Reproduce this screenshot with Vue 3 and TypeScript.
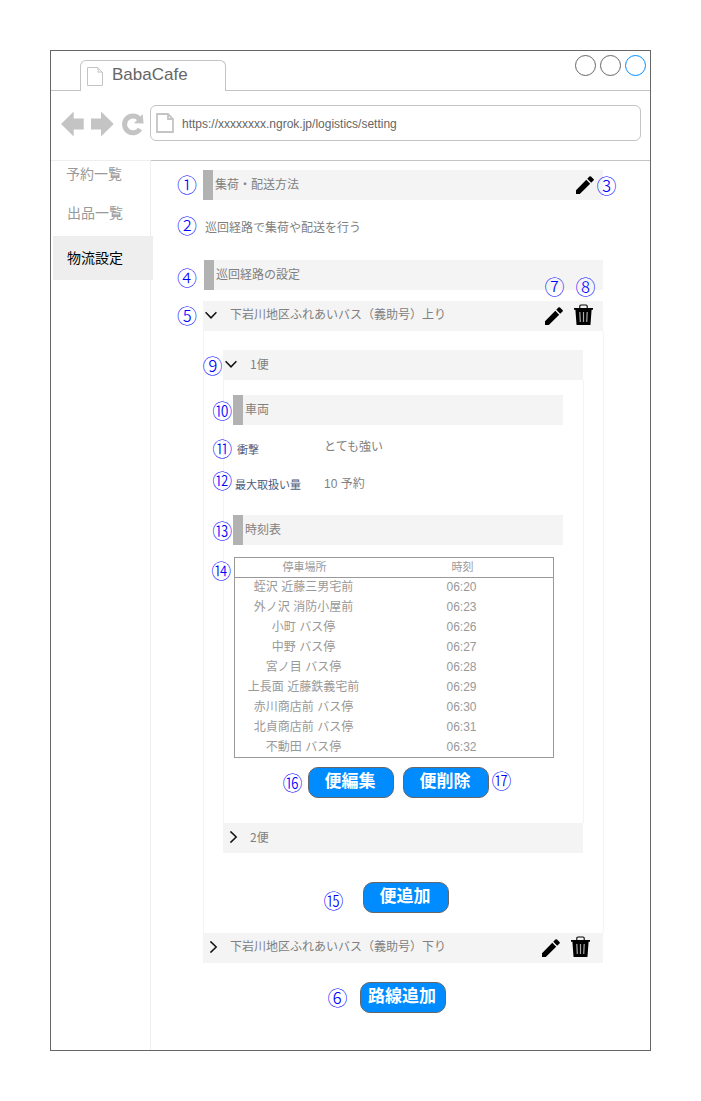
<script setup lang="ts">
interface Stop { name: string; time: string }
interface Note { label: string; x: number; y: number }

const stops: Stop[] = [
  { name: '蛭沢 近藤三男宅前', time: '06:20' },
  { name: '外ノ沢 消防小屋前', time: '06:23' },
  { name: '小町 バス停', time: '06:26' },
  { name: '中野 バス停', time: '06:27' },
  { name: '宮ノ目 バス停', time: '06:28' },
  { name: '上長面 近藤鉄義宅前', time: '06:29' },
  { name: '赤川商店前 バス停', time: '06:30' },
  { name: '北貞商店前 バス停', time: '06:31' },
  { name: '不動田 バス停', time: '06:32' },
]

// Callout numbers, placed by their centre point
const notes: Note[] = [
  { label: '①', x: 187, y: 185 },
  { label: '②', x: 187, y: 226 },
  { label: '③', x: 606.5, y: 186 },
  { label: '④', x: 187, y: 278 },
  { label: '⑤', x: 187, y: 316 },
  { label: '⑦', x: 554.5, y: 287 },
  { label: '⑧', x: 585.5, y: 287 },
  { label: '⑨', x: 212.5, y: 366 },
  { label: '⑩', x: 222.3, y: 411 },
  { label: '⑪', x: 222.3, y: 449 },
  { label: '⑫', x: 222.3, y: 481 },
  { label: '⑬', x: 222.3, y: 531 },
  { label: '⑭', x: 221.3, y: 571 },
  { label: '⑯', x: 292.5, y: 783 },
  { label: '⑰', x: 501.5, y: 781 },
  { label: '⑮', x: 333.5, y: 901 },
  { label: '⑥', x: 337.5, y: 998 },
]

const pencil = 'M0 14.2V18H3.8L14.2 7.8L10.3 3.8ZM11.3 2.8L15.2 6.8L17.5 4.6Q18.2 3.8 17.5 3.1L15 .6Q14.2 -.2 13.4 .6Z'
</script>

<template>
  <div class="page">
    <div class="window">
      <header class="tabs">
        <div class="tab-lead"></div>
        <div class="tab">
          <svg class="tab-doc" width="16" height="19" viewBox="0 0 16 19">
            <path d="M.5 .5H10.5L15.5 5.5V18.5H.5ZM10.5 .5Q12 4 10.8 5.2Q13 4.4 15.5 5.5" fill="none" stroke="#c4c4c4" />
          </svg>
          <span>BabaCafe</span>
        </div>
        <div class="tab-rest">
          <i class="dot"></i><i class="dot"></i><i class="dot blue"></i>
        </div>
      </header>

      <div class="toolbar">
        <svg class="nav" width="84" height="26" viewBox="0 0 84 26">
          <path d="M0 13L12.7 .5V7.5H22.7V18.5H12.7V25.5Z" fill="#c4c4c4" />
          <path d="M52.7 13L40 .5V7.5H30V18.5H40V25.5Z" fill="#c4c4c4" />
          <path d="M78.4 8A8.4 8.4 0 1 0 79 18" fill="none" stroke="#c4c4c4" stroke-width="5" />
          <path d="M81.6 3L82.6 12.6L73 12.2Z" fill="#c4c4c4" />
        </svg>
        <div class="address">
          <svg width="18" height="20" viewBox="0 0 18 20">
            <path d="M1 1H12L17 6V19H1ZM12 1V6H17" fill="none" stroke="#c4c4c4" stroke-width="1.8" />
          </svg>
          <span>https://xxxxxxxx.ngrok.jp/logistics/setting</span>
        </div>
      </div>

      <div class="body">
        <nav class="side">
          <a class="item first">予約一覧</a>
          <a class="item second">出品一覧</a>
          <a class="item active">物流設定</a>
        </nav>

        <main class="content">
          <div class="bar heading">
            <span>集荷・配送方法</span>
            <svg class="pencil top" width="18" height="18" viewBox="0 0 18 18"><path :d="pencil" /></svg>
          </div>
          <p class="method">巡回経路で集荷や配送を行う</p>
          <div class="bar heading routes"><span>巡回経路の設定</span></div>

          <section class="route">
            <div class="bar toggle">
              <svg class="chev" width="12" height="12" viewBox="0 0 12 12"><path d="M.6 3.2L6 8.8L11.4 3.2" /></svg>
              <span>下岩川地区ふれあいバス（義助号）上り</span>
              <svg class="pencil" width="18" height="18" viewBox="0 0 18 18"><path :d="pencil" /></svg>
              <svg class="trash" width="19" height="22" viewBox="0 0 19 22">
                <path d="M5.8 4V2.2Q5.8 1 7 1H12Q13.2 1 13.2 2.2V4" fill="none" stroke="#000" stroke-width="1.1" />
                <path d="M0 4H19V5.7H17.6L16.5 20.5Q16.4 21 15.8 21H3.2Q2.6 21 2.5 20.5L1.4 5.7H0Z" />
                <path d="M5.8 8L6.3 18M9.5 8V18M13.2 8L12.7 18" fill="none" stroke="#aaa" stroke-width="1.2" />
              </svg>
            </div>

            <div class="route-body">
              <div class="trip">
                <div class="bar toggle">
                  <svg class="chev" width="12" height="12" viewBox="0 0 12 12"><path d="M.6 3.2L6 8.8L11.4 3.2" /></svg>
                  <span class="cjk">1便</span>
                </div>
                <div class="trip-body">
                  <div class="bar heading"><span>車両</span></div>
                  <dl class="facts">
                    <div class="fact impact"><dt>衝撃</dt><dd>とても強い</dd></div>
                    <div class="fact"><dt>最大取扱い量</dt><dd>10 予約</dd></div>
                  </dl>
                  <div class="bar heading"><span>時刻表</span></div>
                  <div class="table">
                    <div class="row head"><span>停車場所</span><span>時刻</span></div>
                    <div v-for="s in stops" :key="s.time" class="row">
                      <span>{{ s.name }}</span><span>{{ s.time }}</span>
                    </div>
                  </div>
                  <div class="actions">
                    <button class="btn">便編集</button>
                    <button class="btn">便削除</button>
                  </div>
                </div>
                <div class="bar toggle">
                  <svg class="chev next" width="12" height="12" viewBox="0 0 12 12"><path d="M3.4 .4L9.2 6L3.4 11.6" /></svg>
                  <span class="cjk">2便</span>
                </div>
              </div>
              <button class="btn add-trip">便追加</button>
            </div>

            <div class="bar toggle down">
              <svg class="chev next" width="12" height="12" viewBox="0 0 12 12"><path d="M3.4 .4L9.2 6L3.4 11.6" /></svg>
              <span>下岩川地区ふれあいバス（義助号）下り</span>
              <svg class="pencil" width="18" height="18" viewBox="0 0 18 18"><path :d="pencil" /></svg>
              <svg class="trash" width="19" height="22" viewBox="0 0 19 22">
                <path d="M5.8 4V2.2Q5.8 1 7 1H12Q13.2 1 13.2 2.2V4" fill="none" stroke="#000" stroke-width="1.1" />
                <path d="M0 4H19V5.7H17.6L16.5 20.5Q16.4 21 15.8 21H3.2Q2.6 21 2.5 20.5L1.4 5.7H0Z" />
                <path d="M5.8 8L6.3 18M9.5 8V18M13.2 8L12.7 18" fill="none" stroke="#aaa" stroke-width="1.2" />
              </svg>
            </div>
          </section>
          <button class="btn add-route">路線追加</button>
        </main>
      </div>
    </div>

    <span v-for="n in notes" :key="n.label" class="note" :style="{ left: n.x - 10 + 'px', top: n.y - 10 + 'px' }">{{ n.label }}</span>
  </div>
</template>

<style>
html, body { background: #fff; overflow: hidden; }
</style>

<style scoped>
* { box-sizing: border-box; }
.page {
  position: relative;
  width: 701px;
  height: 1101px;
  padding: 50px;
  font-family: "Liberation Sans", "Noto Sans CJK JP", sans-serif;
  font-size: 12px;
  color: #808080;
  white-space: nowrap;
}
.cjk { font-family: "Noto Sans CJK JP", sans-serif; line-height: 27px; }
svg { display: block; flex: none; }
.window { width: 601px; height: 1001px; border: 1px solid #666; }

.tabs { display: flex; align-items: flex-end; height: 40px; }
.tab-lead { width: 29px; border-bottom: 1px solid #c4c4c4; }
.tab {
  display: flex;
  width: 146px;
  height: 31px;
  padding-left: 6px;
  border: 1px solid #c4c4c4;
  border-bottom: 0;
  border-radius: 6px 6px 0 0;
  font-size: 17px;
  line-height: 27px;
  color: #666;
}
.tab-doc { margin: 6px 9px 0 0; }
.tab-rest {
  flex: 1;
  display: flex;
  justify-content: flex-end;
  gap: 4px;
  height: 40px;
  padding: 4px 4px 0 0;
  border-bottom: 1px solid #c4c4c4;
}
.dot { width: 21px; height: 21px; border: 1px solid #666; border-radius: 50%; }
.dot.blue { border-color: #008cff; }

.toolbar { display: flex; height: 69px; padding: 14px 0 0 10px; }
.nav { margin: 6px 5px 0 0; }
.address {
  display: flex;
  align-items: center;
  width: 491px;
  height: 36px;
  padding-left: 5px;
  border: 1px solid #c4c4c4;
  border-radius: 6px;
  color: #666;
}
.address span { margin-left: 8px; padding-top: 1px; }

.body { display: flex; height: 890px; }
.side { width: 100px; border-top: 1px solid #eee; border-right: 1px solid #eee; font-size: 14px; color: #999; }
.item { display: block; padding-left: 16px; height: 44px; line-height: 44px; }
.item.first { height: 28px; line-height: 27px; padding-left: 15px; }
.item.second { height: 47px; line-height: 48px; }
.item.active { width: 100px; margin-left: 2px; padding-left: 14px; background: #eee; color: #000; }

.content { flex: 1; border-top: 1px solid #c4c4c4; padding: 9px 46px 0 52px; }
.bar { display: flex; height: 30px; background: #f4f4f4; line-height: 29px; }
.heading { padding-left: 2px; line-height: 31px; }
.heading::before { content: ""; width: 10px; margin: 0 2px 0 -2px; background: #b2b2b2; }
.heading > span { flex: 1; }
.content > .heading { width: 400px; }
.top { margin: 6px 9px 0 0; }
.method { margin: 0; padding-left: 2px; height: 60px; line-height: 56px; }
.content > .routes { width: 399px; margin: 0 0 11px 1px; }
.route { width: 400px; }
.toggle > span { flex: 1; }
.chev { margin: 8px 13px 0 2px; fill: none; stroke: #111; stroke-width: 1.5; }
.route > .toggle > .chev { margin-right: 13px; }
.trip .chev { margin-right: 13px; }
.chev.next { margin-left: 4px; }
.route > .toggle > .next { margin-right: 11px; }
.trip .next { margin-right: 11px; }
.route > .toggle > .pencil { margin: 6px 11px 0 0; }
.trash { margin: 3px 10px 0 0; }
.down > .trash { margin-right: 13px; }

.route-body {
  height: 602px;
  padding: 19px 19px 0;
  border: 1px solid #f4f4f4;
  border-width: 0 1px;
  margin-right: -1px;
}
.trip { width: 361px; }
.trip > .bar { width: 360px; }
.trip-body { height: 443px; padding: 15px 19px 0 9px; border: 1px solid #f4f4f4; border-width: 0 1px; }
.trip-body > .heading { width: 330px; }
.facts { margin: 0; height: 90px; padding-top: 11px; }
.fact { display: flex; height: 37px; line-height: 22px; padding-left: 2px; }
.fact dt { width: 89px; font-size: 11px; line-height: 25px; color: #4d5b7c; }
.fact dd { margin: 0; }
.impact { padding-left: 4px; }
.impact dt { width: 87px; line-height: 28px; }

.table { width: 320px; height: 201px; margin: 12px 0 0 1px; border: 1px solid #999; color: #999; }
.row { display: flex; height: 20px; line-height: 19px; text-align: center; }
.row span:first-child { width: 137px; }
.row span:last-child { width: 179px; }
.head { height: 20px; border-bottom: 1px solid #999; font-size: 11px; line-height: 19px; }
.head span:first-child { width: 139px; }
.head span:last-child { width: 177px; }

.actions { display: flex; gap: 9px; padding: 9px 0 0 75px; }
.btn {
  display: block;
  flex: none;
  width: 86px;
  height: 31px;
  padding: 0 2px 6px 0;
  border: 1px solid #666;
  border-radius: 10px;
  background: #008cff;
  color: #fff;
  font: bold 17px/23px "Noto Sans CJK JP", sans-serif;
}
.add-trip { margin: 29px 0 0 140px; }
.add-route { margin: 19px 0 0 157px; }

.note {
  position: absolute;
  width: 20px;
  height: 20px;
  font: 300 20px/20px "Noto Sans CJK JP Light", "Noto Sans CJK JP DemiLight", "Noto Sans CJK JP", sans-serif;
  color: #00f;
}
</style>
